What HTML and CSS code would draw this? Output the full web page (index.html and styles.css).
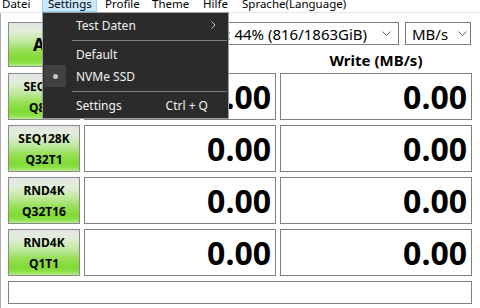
FILE: index.html
```html
<!DOCTYPE html>
<html>
<head>
<meta charset="utf-8">
<link rel="stylesheet" href="styles.css">
</head>
<body>
<div class="menubar">
  <span class="mi m-datei">Datei</span>
  <span class="mi m-settings active">Settings</span>
  <span class="mi m-profile">Profile</span>
  <span class="mi m-theme">Theme</span>
  <span class="mi m-hilfe">Hilfe</span>
  <span class="mi m-lang">Sprache(Language)</span>
</div>
<main class="app">
  <div class="top">
    <div class="test all">All</div>
    <div class="topright">
      <div class="combos">
        <div class="combo drive"><span class="combo-text">C: 44% (816/1863GiB)</span><svg class="chev" width="9" height="5" viewBox="0 0 9 5"><path d="M0.5 0.5 L4.5 4.5 L8.5 0.5" fill="none" stroke="#606060" stroke-width="1"/></svg></div>
        <div class="combo unit"><span class="combo-text">MB/s</span><svg class="chev" width="9" height="5" viewBox="0 0 9 5"><path d="M0.5 0.5 L4.5 4.5 L8.5 0.5" fill="none" stroke="#606060" stroke-width="1"/></svg></div>
      </div>
      <div class="heads">
        <div>Read (MB/s)</div>
        <div>Write (MB/s)</div>
      </div>
    </div>
  </div>
  <div class="grid">
    <div class="test"><span>SEQ1M</span><span>Q8T1</span></div>
    <div class="box val">0.00</div>
    <div class="box val">0.00</div>
    <div class="test"><span>SEQ128K</span><span>Q32T1</span></div>
    <div class="box val">0.00</div>
    <div class="box val">0.00</div>
    <div class="test"><span>RND4K</span><span>Q32T16</span></div>
    <div class="box val">0.00</div>
    <div class="box val">0.00</div>
    <div class="test"><span>RND4K</span><span>Q1T1</span></div>
    <div class="box val">0.00</div>
    <div class="box val">0.00</div>
  </div>
  <div class="box status"></div>
</main>
<div class="dropdown">
  <div class="dd-item"><span>Test Daten</span><svg class="sub" width="5" height="8" viewBox="0 0 5 8"><path d="M0.5 0.5 L4 4 L0.5 7.5" fill="none" stroke="#c8c8c8" stroke-width="1"/></svg></div>
  <div class="dd-sep"></div>
  <div class="dd-item"><span>Default</span></div>
  <div class="dd-item"><span class="radio"><span class="dot"></span></span><span>NVMe SSD</span></div>
  <div class="dd-sep"></div>
  <div class="dd-item"><span>Settings</span><span class="shortcut">Ctrl + Q</span></div>
</div>
</body>
</html>
```
FILE: styles.css
```css
html, body {
  margin: 0;
  padding: 0;
}
body {
  width: 480px;
  height: 308px;
  overflow: hidden;
  background: #ffffff;
  font-family: "Noto Sans", "Open Sans", sans-serif;
  color: #000;
  position: relative;
}

/* menu bar */
.menubar {
  display: flex;
  align-items: flex-end;
  height: 12px;
  overflow: hidden;
  border-bottom: 1px solid #e6e6e6;
  margin-left: -4px;
  font-size: 11.5px;
}
.mi {
  flex: none;
  box-sizing: border-box;
  height: 16px;
  line-height: 16px;
  padding-left: 6px;
  margin-right: 2px;
  white-space: nowrap;
}
.m-datei { width: 44px; }
.m-settings { width: 55px; }
.m-profile { width: 45px; }
.m-theme { width: 49px; }
.m-hilfe { width: 37px; }
.m-lang { width: 140px; }
.mi.active {
  background: #cce8ff;
  box-shadow: inset 0 0 0 1px #99d1ff;
}

/* main window */
.app {
  border-left: 1px solid #ababab;
  padding: 9px 0 0 7px;
  height: 295px;
  box-sizing: border-box;
}
.top {
  display: flex;
  gap: 4px;
}
.topright {
  width: 388px;
  display: flex;
  flex-direction: column;
}
.combos {
  display: flex;
  gap: 6px;
  height: 23px;
}
.combo {
  box-sizing: border-box;
  height: 23px;
  border: 1px solid #7a7a7a;
  background: #fff;
  display: flex;
  align-items: center;
  font-size: 15px;
  white-space: nowrap;
  overflow: hidden;
}
.drive {
  width: 315px;
  padding-left: 132px;
}
.unit {
  width: 66px;
  padding-left: 6px;
}
.chev {
  margin-left: auto;
  margin-right: 3px;
  flex: none;
}
.drive .chev { margin-right: 7px; }
.heads {
  display: grid;
  grid-template-columns: 192px 192px;
  column-gap: 4px;
  height: 28px;
  align-items: center;
  text-align: center;
  font-weight: bold;
  font-size: 15px;
  line-height: 20px;
  padding-top: 1px;
  box-sizing: border-box;
}

/* test buttons */
.test {
  box-sizing: border-box;
  border: 1px solid #8a8a8a;
  background: linear-gradient(to bottom, #e4e4e4 0%, #e2eedb 18%, #c3e9a3 42%, #98e05a 62%, #80db32 82%, #8ee04a 93%, #b8ee90 100%);
  display: flex;
  flex-direction: column;
  align-items: center;
  justify-content: center;
  font-weight: bold;
  font-size: 12px;
  line-height: 21px;
}
.all {
  width: 72px;
  height: 45px;
  font-size: 17px;
}

.grid {
  display: grid;
  grid-template-columns: 72px 192px 192px;
  grid-auto-rows: 47px;
  column-gap: 4px;
  row-gap: 5px;
}
.box {
  box-sizing: border-box;
  border: 1px solid #7f7f7f;
  background: #fff;
}
.val {
  font-size: 32px;
  font-weight: bold;
  text-align: right;
  padding: 1px 4px 0 0;
  line-height: 44px;
}
.status {
  margin-top: 5px;
  width: 464px;
  height: 23px;
}

/* dropdown menu */
.dropdown {
  position: absolute;
  left: 42px;
  top: 12px;
  width: 187px;
  box-sizing: border-box;
  border: 1px solid #a0a0a0;
  background: #2b2b2b;
  color: #f2f2f2;
  font-size: 12px;
  padding: 1px 0 2px;
}
.dd-item {
  position: relative;
  height: 22px;
  display: flex;
  align-items: center;
  padding-left: 33px;
  padding-right: 12px;
  white-space: nowrap;
}
.sub {
  margin-left: auto;
}
.shortcut {
  margin-left: auto;
  margin-right: 8px;
}
.dd-sep {
  height: 1px;
  background: #7e7e7e;
  margin: 4px 1px 2px 29px;
}
.radio {
  position: absolute;
  left: 1px;
  top: 0;
  width: 22px;
  height: 22px;
  background: #414141;
  display: flex;
  align-items: center;
  justify-content: center;
}
.dot {
  width: 5px;
  height: 5px;
  border-radius: 50%;
  background: #c4c4c4;
}
```
